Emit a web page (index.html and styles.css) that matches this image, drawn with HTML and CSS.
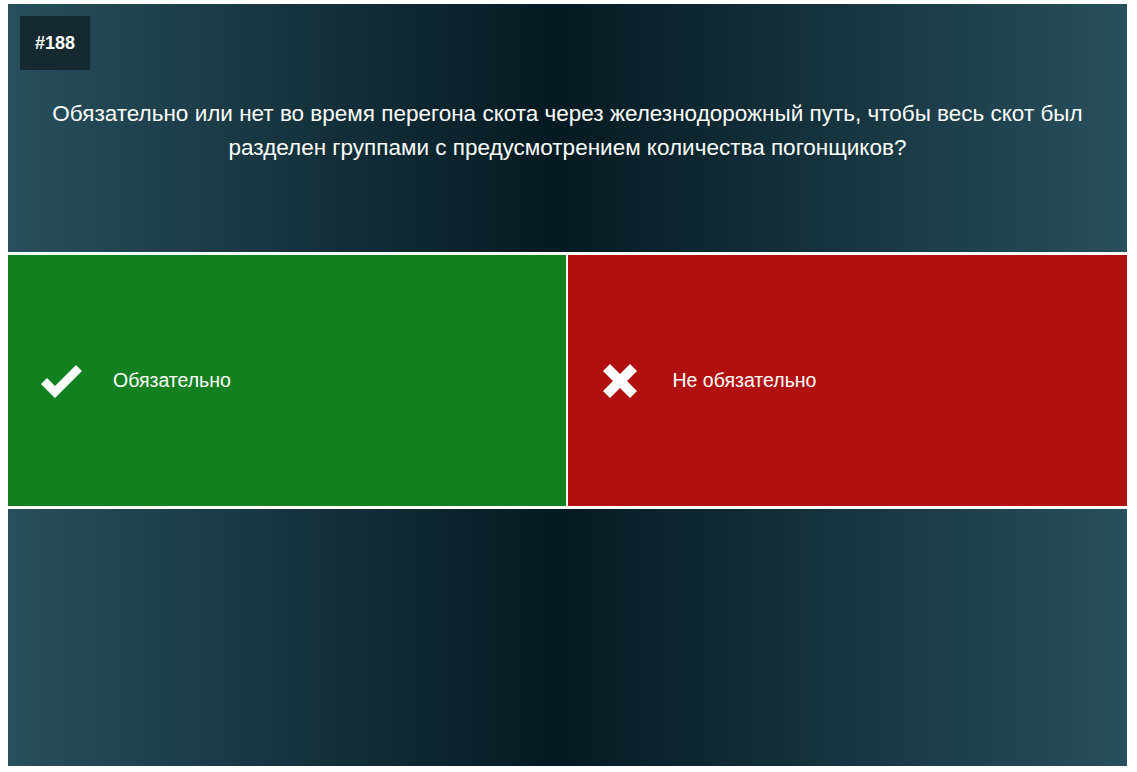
FILE: index.html
```html
<!DOCTYPE html>
<html lang="ru">
<head>
<meta charset="utf-8">
<link rel="stylesheet" href="styles.css">
</head>
<body>
<div class="quiz">
  <section class="question">
    <div class="badge">#188</div>
    <p class="qtext">Обязательно или нет во время перегона скота через железнодорожный путь, чтобы весь скот был разделен группами с предусмотрением количества погонщиков?</p>
  </section>
  <section class="answers">
    <div class="answer yes">
      <svg class="icon" width="42" height="34" viewBox="0 0 42 34"><path d="M0 20 L6 14 L14 22 L35 1 L41 7 L14 34 Z" fill="#fff"/></svg>
      <span>Обязательно</span>
    </div>
    <div class="answer no">
      <svg class="icon" width="34" height="34" viewBox="0 0 34 34"><path d="M0 7 L7 0 L17 10 L27 0 L34 7 L24 17 L34 27 L27 34 L17 24 L7 34 L0 27 L10 17 Z" fill="#fff"/></svg>
      <span>Не обязательно</span>
    </div>
  </section>
  <section class="footer"></section>
</div>
</body>
</html>
```
FILE: styles.css
```css
html, body { background: #fff; }
body {
  margin: 4px 10px 6px 8px;
  font-family: "Liberation Sans", Arial, sans-serif;
  color: #fff;
}
.quiz {
  width: 1119px;
  display: flex;
  flex-direction: column;
}
.question, .footer {
  background: linear-gradient(to right, #284f5d 0%, #051b23 48%, #051b23 50%, #284f5d 100%);
}
.question {
  height: 248px;
  padding: 12px 12px 0 12px;
  box-sizing: border-box;
}
.badge {
  width: 70px;
  height: 54px;
  background: #152a30;
  font-weight: bold;
  font-size: 18px;
  display: flex;
  align-items: center;
  justify-content: center;
  padding-top: 1px;
  box-sizing: border-box;
}
.qtext {
  margin: 27px 20px 0;
  text-align: center;
  font-size: 22.5px;
  line-height: 34px;
}
.answers {
  display: flex;
  gap: 2px;
  margin: 3px 0;
  height: 251px;
}
.answer {
  flex: 1;
  display: flex;
  align-items: center;
  font-size: 19.5px;
}
.yes { background: #138020; padding-left: 33px; }
.no { background: #b0110e; padding-left: 35px; }
.yes .icon { margin-right: 30px; }
.no .icon { margin-right: 36px; }
.footer { height: 257px; }
```
